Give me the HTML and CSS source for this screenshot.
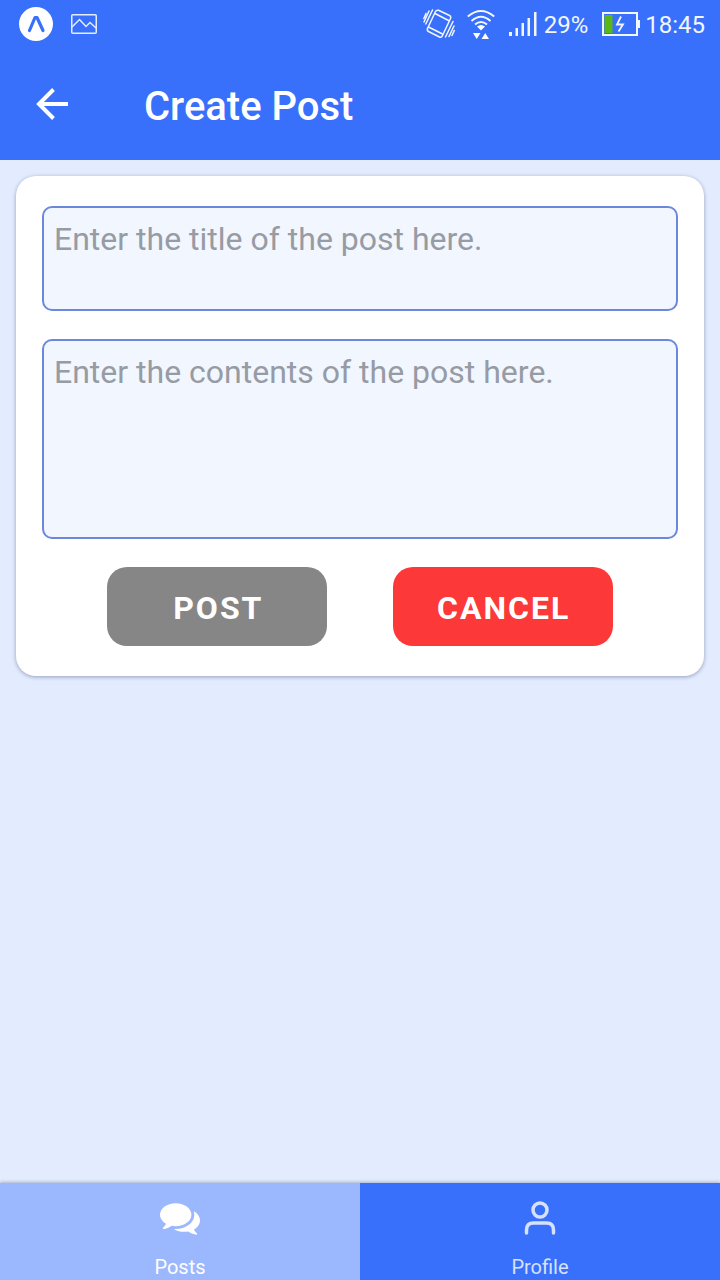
FILE: index.html
```html
<!DOCTYPE html>
<html lang="en">
<head>
<meta charset="utf-8">
<meta name="viewport" content="width=device-width, initial-scale=1">
<title>Create Post</title>
<link rel="stylesheet" href="styles.css">
</head>
<body>
<div class="screen">
  <div class="status">
    <div class="status-left">
      <svg width="34" height="34" viewBox="0 0 34 34" aria-hidden="true"><circle cx="17" cy="17" r="17" fill="#fff"/><path d="M10.500 23.500L16 10.500H18L24 23.500" fill="none" stroke="#3870fc" stroke-width="3.200" stroke-linejoin="round" stroke-linecap="round"/></svg>
      <svg width="26" height="20" viewBox="0 0 26 20" fill="none" stroke="#e4ecff" stroke-width="1.500" aria-hidden="true"><rect x=".75" y=".75" width="24.500" height="18.500" rx="1"/><path d="M1 13L8.500 5.500L15 12.500L19 8.500L25 14"/></svg>
    </div>
    <div class="status-right">
      <svg width="32" height="30" viewBox="0 0 32 30" fill="none" stroke="#f2f6ff" stroke-width="1.500" stroke-linecap="round" stroke-linejoin="round" aria-hidden="true"><path d="M12.500 2.500Q13.500 .8 15.500 1.300L26.500 6.500Q28.300 7.500 27.500 9.500L19.500 26.500Q18.500 28.800 16.500 28L5.500 22.500Q3.800 21.500 4.500 19.500ZM12 4.500L26.500 12M5.500 18L19.500 25"/><path d="M9.500 1L2.800 15M6 2L1 13M3 4.500L.8 9.500M30 12.500L22.500 28M31 17L26 27.500M31.300 21.500L29 26.500"/></svg>
      <svg class="wifi" width="28" height="30" viewBox="0 0 28 30" fill="none" stroke="#f2f6ff" stroke-width="2" aria-hidden="true"><path d="M.8 7.500Q14-3.500 27.200 7.500M4.500 12Q14 3.500 23.500 12M8 15.500Q14 10.500 20 15.500"/><path d="M10 17.500Q14 14.500 18 17.500L14 21.500Z" fill="#fff" stroke="none"/><path d="M6 24H13.500L9.750 30ZM14.500 30H22L18.250 24Z" fill="#fff" stroke="none"/></svg>
      <svg class="signal" width="28" height="24" viewBox="0 0 28 24" fill="#f2f6ff" aria-hidden="true"><path d="M0 20h3v4H0zM6.500 16H9v8H6.500zM12.500 11H15v13h-2.500zM18.500 6H21v18h-2.500zM25 0h2.500v24H25z"/></svg>
      <span class="status-text">29%</span>
      <svg class="battery" width="38" height="24" viewBox="0 0 38 24" aria-hidden="true"><rect x="1" y="1" width="34" height="22" fill="none" stroke="#f2f6ff" stroke-width="2"/><path d="M35 8h3v8h-3z" fill="#f2f6ff"/><path d="M2.500 3h8v18h-8z" fill="#5cb614"/><path d="M19 4.500L15 12.500H21L16.500 19.500" fill="none" stroke="#f2f6ff" stroke-width="1.800"/></svg>
      <span class="status-text">18:45</span>
    </div>
  </div>
  <header class="header">
    <button class="back" type="button" aria-label="Back">
      <svg width="34" height="34" viewBox="0 0 34 34" fill="none" stroke="#fff" stroke-width="4" aria-hidden="true"><path d="M18.500 2.500L4 17L18.500 31.500M4 17H33"/></svg>
    </button>
    <h1 class="title">Create Post</h1>
  </header>
  <main class="main">
    <form class="card">
      <textarea class="field" aria-label="Post title" placeholder="Enter the title of the post here."></textarea>
      <textarea class="field field-body" aria-label="Post contents" placeholder="Enter the contents of the post here."></textarea>
      <div class="actions">
        <button class="btn btn-post" type="button">POST</button>
        <button class="btn btn-cancel" type="button">CANCEL</button>
      </div>
    </form>
  </main>
  <nav class="tabs">
    <a class="tab tab-active" href="#posts">
      <svg width="40" height="40" viewBox="0 0 28 28" fill="#fff" aria-hidden="true"><path d="M22 11c0 4.422-4.922 8-11 8-0.953 0-1.875-0.094-2.750-0.250-1.297 0.922-2.766 1.594-4.344 2-0.422 0.109-0.875 0.187-1.344 0.250h-0.047c-0.234 0-0.453-0.187-0.500-0.453c-0.063-0.297 0.141-0.484 0.313-0.688 0.609-0.688 1.297-1.297 1.828-2.594-2.531-1.469-4.156-3.734-4.156-6.266 0-4.422 4.922-8 11-8s11 3.578 11 8zM28 15c0 2.547-1.625 4.797-4.156 6.266 0.531 1.297 1.219 1.906 1.828 2.594 0.172 0.203 0.375 0.391 0.313 0.688c-0.063 0.281-0.297 0.484-0.547 0.453-0.469-0.063-0.922-0.141-1.344-0.250-1.578-0.406-3.047-1.078-4.344-2-0.875 0.156-1.797 0.250-2.750 0.250-2.828 0-5.422-0.781-7.375-2.063 0.453 0.031 0.922 0.063 1.375 0.063 3.359 0 6.531-0.969 8.953-2.719 2.609-1.906 4.047-4.484 4.047-7.281 0-0.812-0.125-1.609-0.359-2.375 2.641 1.453 4.359 3.766 4.359 6.375z"/></svg>
      <span>Posts</span>
    </a>
    <a class="tab" href="#profile">
      <svg width="40" height="40" viewBox="0 0 40 40" fill="none" stroke="#d7e1fc" stroke-width="3.500" stroke-linecap="round" aria-hidden="true"><circle cx="20" cy="11" r="7"/><path d="M6.500 34V31Q6.500 24 13.500 24H26.500Q33.500 24 33.500 31V34"/></svg>
      <span>Profile</span>
    </a>
  </nav>
</div>
</body>
</html>
```
FILE: styles.css
```css
* { box-sizing: border-box; }

body {
  margin: 0;
  font-family: Roboto, "Noto Sans", sans-serif;
  background: #e3ecff;
}

.screen {
  display: flex;
  flex-direction: column;
  min-height: 100vh;
}

svg { display: block; flex: none; }

.status {
  display: flex;
  justify-content: space-between;
  align-items: center;
  height: 48px;
  padding: 0 15px 0 19px;
  background: #3870fc;
  color: #f2f6ff;
  font-size: 24px;
  line-height: 28px;
}

.status-left,
.status-right {
  display: flex;
  align-items: center;
}

.status-left { gap: 18px; }
.status-text { padding-top: 2px; }
.wifi { margin-left: 12px; }
.signal { margin: 0 7px 0 14px; }
.battery { margin: 0 5px 0 14px; }

.header {
  display: flex;
  align-items: center;
  height: 112px;
  padding: 0 35px;
  background: #3870fc;
  color: #fff;
}

.back {
  margin-right: 75px;
  padding: 0;
  border: 0;
  background: none;
  cursor: pointer;
}

.title {
  margin: 6px 0 0;
  font-size: 40px;
  font-weight: 500;
  line-height: 48px;
}

.main {
  flex: 1;
  padding: 16px;
}

.card {
  display: flex;
  flex-direction: column;
  gap: 28px;
  padding: 30px 26px;
  border-radius: 20px;
  background: #fff;
  box-shadow: 0 1px 4px rgba(30, 45, 90, 0.4);
}

.field {
  display: block;
  width: 100%;
  height: 105px;
  padding: 12px 10px;
  border: 2px solid #6b88dc;
  border-radius: 10px;
  background: #f1f6ff;
  color: #222;
  font: 32px/38px Roboto, "Noto Sans", sans-serif;
  resize: none;
}

.field::placeholder { color: #979ba4; opacity: 1; }
.field-body { height: 200px; }

.actions {
  display: flex;
  justify-content: space-evenly;
}

.btn {
  width: 220px;
  padding: 22px 0 18px 2px;
  border: 0;
  border-radius: 20px;
  color: #fff;
  font: 700 32px/39px Roboto, "Noto Sans", sans-serif;
  letter-spacing: 2px;
  cursor: pointer;
}

.btn-post { background: #868686; }
.btn-cancel { background: #fc3838; }

.tabs {
  display: flex;
  box-shadow: 0 -1px 3px rgba(30, 45, 90, 0.3);
}

.tab {
  flex: 1;
  display: flex;
  flex-direction: column;
  align-items: center;
  gap: 16px;
  padding: 16px 0 1px;
  background: #3870fc;
  color: #d7e1fc;
  font-size: 20px;
  line-height: 24px;
  text-decoration: none;
}

.tab-active {
  background: #9bb7fe;
  color: #fff;
}
```
